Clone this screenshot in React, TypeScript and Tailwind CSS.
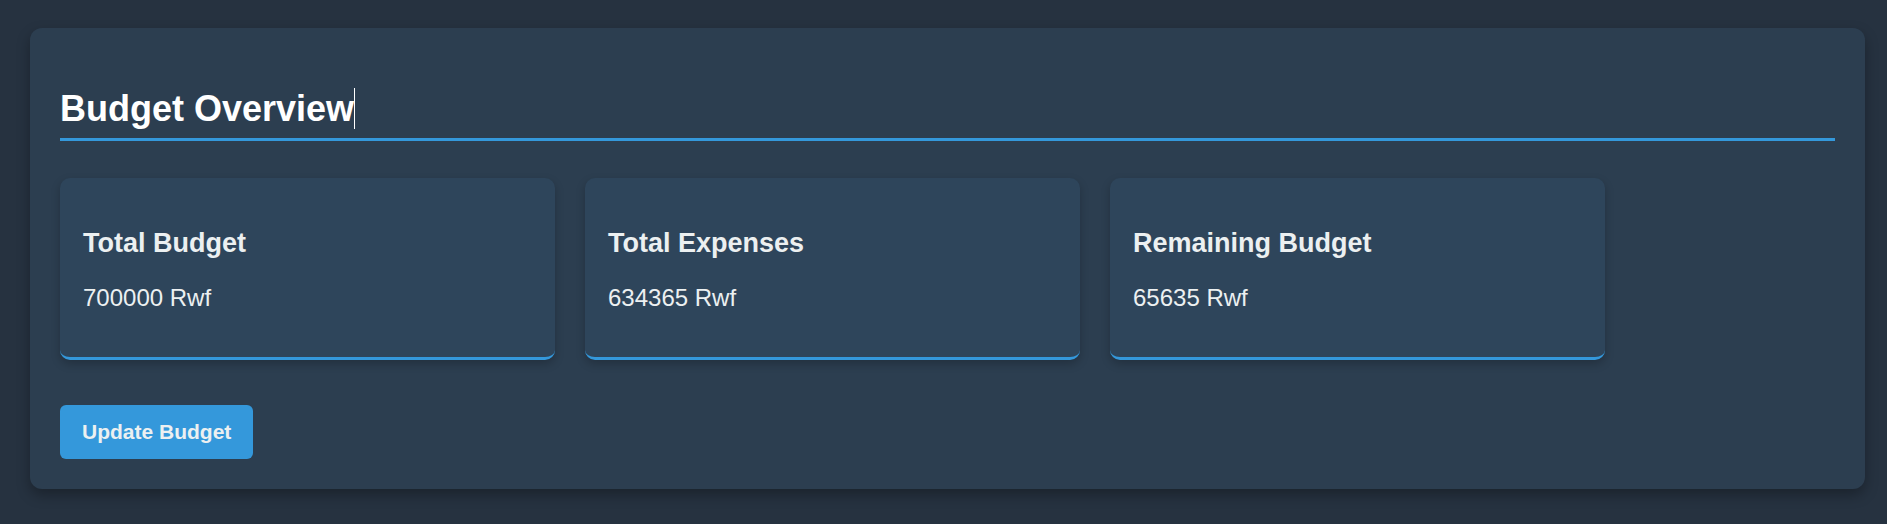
import React from "react";

const cards = [
  { title: "Total Budget", value: "700000 Rwf" },
  { title: "Total Expenses", value: "634365 Rwf" },
  { title: "Remaining Budget", value: "65635 Rwf" },
];

export default function App() {
  return (
    <div
      className="min-h-[524px] w-full bg-[#263240] pt-[28px] pl-[30px] pr-[22px] pb-[35px]"
      style={{ fontFamily: '"Liberation Sans", Arial, sans-serif' }}
    >
      <div className="rounded-[12px] bg-[#2c3e50] px-[30px] pt-[60px] pb-[30px] shadow-[0_6px_14px_rgba(0,0,0,0.3)]">
        <h2 className="flex items-center border-b-[3px] border-[#3498db] pb-[9px] text-[36px] font-bold leading-[41px] text-white">
          <span>Budget Overview</span>
          <span className="inline-block h-[41px] w-px bg-white" />
        </h2>
        <div className="mt-[37px] flex gap-[30px]">
          {cards.map((c) => (
            <div
              key={c.title}
              className="h-[182px] w-[495px] rounded-[10px] border-b-[3px] border-[#3498db] bg-[#2e455b] pl-[23px] pr-[24px] pt-[50px] shadow-[0_4px_10px_rgba(0,0,0,0.22)]"
            >
              <div className="text-[27px] font-bold leading-[30px] text-[#ecf0f1]">{c.title}</div>
              <div className="mt-[26px] text-[24px] leading-[28px] text-[#ecf0f1]">{c.value}</div>
            </div>
          ))}
        </div>
        <button className="mt-[45px] rounded-[6px] bg-[#3498db] px-[22px] py-[15px] text-[21px] font-bold leading-[24px] text-[#ecf0f1]">
          Update Budget
        </button>
      </div>
    </div>
  );
}
